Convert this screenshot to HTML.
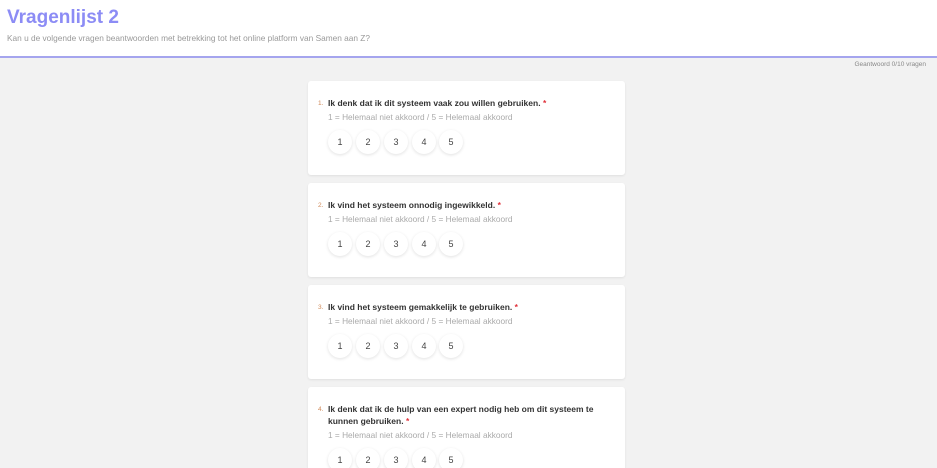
<!DOCTYPE html>
<html><head><style>
html,body{margin:0;width:937px;height:468px;overflow:hidden;}
body{background:#f2f2f2;font-family:"Liberation Sans",sans-serif;position:relative}
.hdr{background:#fff;height:56px;border-bottom:2px solid #a5a5ee;position:relative}
.hdr h1{position:absolute;left:7px;top:7px;margin:0;font-size:19px;color:#8c8cf5;font-weight:bold}
.hdr p{position:absolute;left:7px;top:33px;margin:0;font-size:8.3px;color:#999}
.cnt{position:absolute;right:11px;top:61px;font-size:6.5px;color:#888}
.card{position:absolute;left:308px;width:317px;background:#fff;border-radius:3px;box-shadow:0 1px 2px rgba(0,0,0,.08)}
.q{position:absolute;left:10px;top:16px;width:272px;font-size:8.5px;font-weight:bold;color:#333;line-height:12px;padding-left:10px}
.q i{position:absolute;left:0;top:1px;font-style:normal;font-weight:normal;font-size:6.5px;color:#d08a5a}
.q b{color:#e0313a}
.s{font-size:8.3px;color:#aaa;font-weight:normal;margin-top:2px}
.c{position:absolute;width:24px;height:24px;border-radius:50%;background:#fff;box-shadow:0 1px 3px rgba(0,0,0,.12);font-size:9px;color:#444;text-align:center;line-height:24px}
</style></head><body>
<div class="hdr"><h1>Vragenlijst 2</h1><p>Kan u de volgende vragen beantwoorden met betrekking tot het online platform van Samen aan Z?</p></div>
<div class="cnt">Geantwoord 0/10 vragen</div>

<div class="card" style="top:81px;height:94px"><div class="q"><i>1.</i>Ik denk dat ik dit systeem vaak zou willen gebruiken. <b>*</b><div class="s">1 = Helemaal niet akkoord / 5 = Helemaal akkoord</div></div>
<div class="c" style="left:20px;top:49px">1</div><div class="c" style="left:48px;top:49px">2</div><div class="c" style="left:76px;top:49px">3</div><div class="c" style="left:104px;top:49px">4</div><div class="c" style="left:131px;top:49px">5</div></div>

<div class="card" style="top:183px;height:94px"><div class="q"><i>2.</i>Ik vind het systeem onnodig ingewikkeld. <b>*</b><div class="s">1 = Helemaal niet akkoord / 5 = Helemaal akkoord</div></div>
<div class="c" style="left:20px;top:49px">1</div><div class="c" style="left:48px;top:49px">2</div><div class="c" style="left:76px;top:49px">3</div><div class="c" style="left:104px;top:49px">4</div><div class="c" style="left:131px;top:49px">5</div></div>

<div class="card" style="top:285px;height:94px"><div class="q"><i>3.</i>Ik vind het systeem gemakkelijk te gebruiken. <b>*</b><div class="s">1 = Helemaal niet akkoord / 5 = Helemaal akkoord</div></div>
<div class="c" style="left:20px;top:49px">1</div><div class="c" style="left:48px;top:49px">2</div><div class="c" style="left:76px;top:49px">3</div><div class="c" style="left:104px;top:49px">4</div><div class="c" style="left:131px;top:49px">5</div></div>

<div class="card" style="top:387px;height:81px;border-radius:3px 3px 0 0"><div class="q"><i>4.</i>Ik denk dat ik de hulp van een expert nodig heb om dit systeem te kunnen gebruiken. <b>*</b><div class="s">1 = Helemaal niet akkoord / 5 = Helemaal akkoord</div></div>
<div class="c" style="left:20px;top:61px">1</div><div class="c" style="left:48px;top:61px">2</div><div class="c" style="left:76px;top:61px">3</div><div class="c" style="left:104px;top:61px">4</div><div class="c" style="left:131px;top:61px">5</div></div>
</body></html>
